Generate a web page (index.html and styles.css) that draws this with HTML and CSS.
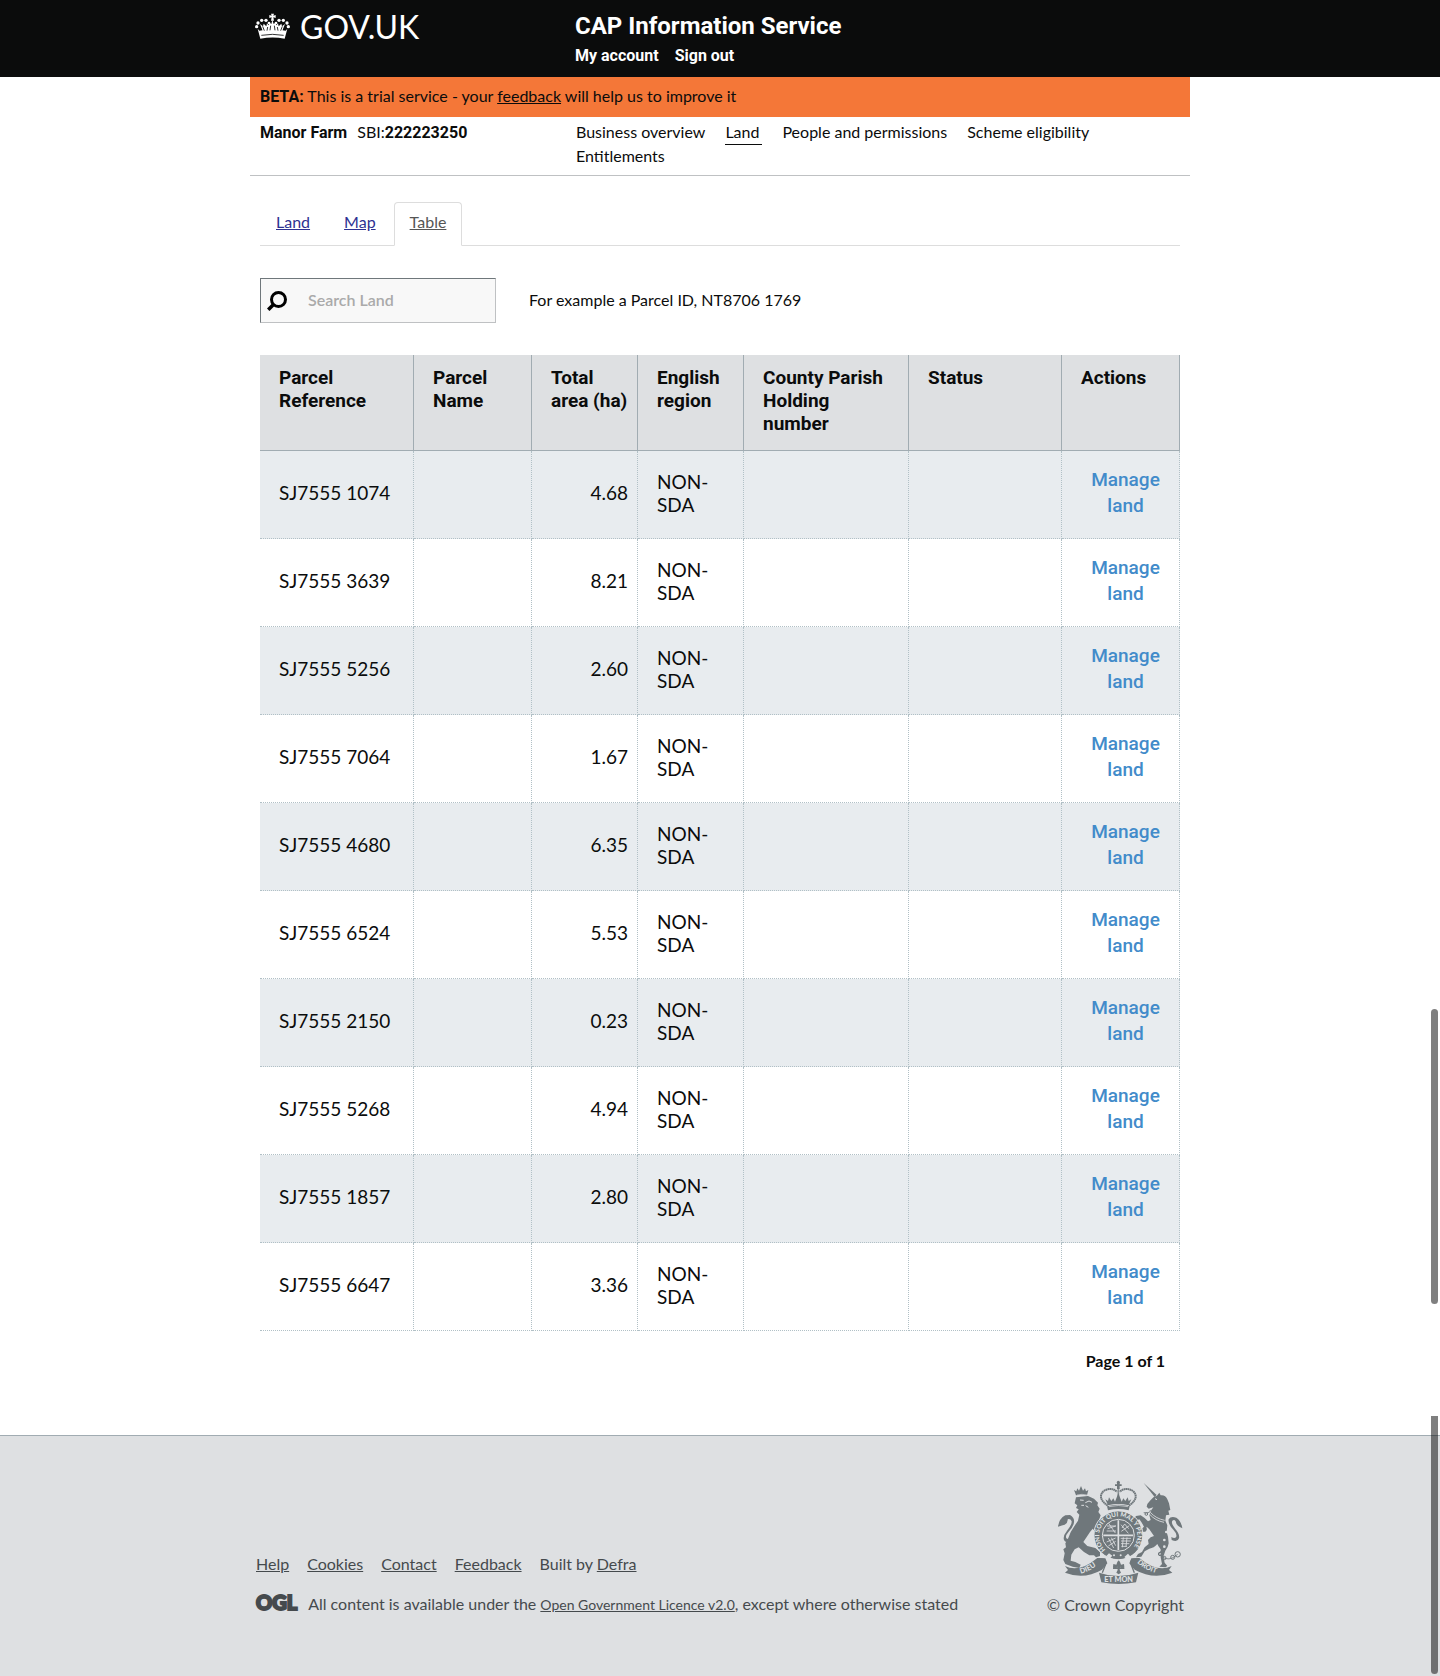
FILE: index.html
```html
<!DOCTYPE html>
<html lang="en">
<head>
<meta charset="utf-8">
<title>Land - CAP Information Service</title>
<link rel="stylesheet" href="styles.css">
</head>
<body>
<header class="site-header">
  <div class="wrap site-header-inner">
    <a class="logo" href="#">
      <svg class="crown" viewBox="45 39 108 78" aria-hidden="true">
        <g fill="#fff">
          <path d="M93 41h9l-2 6 7-2v9l-7-2 2 10h-9l2-10-7 2v-9l7 2z"/>
          <path d="M97 60l4 12 5-4 3 8 5-6 2 9 8-8 2 8 9-7-6 15-2 6-7-1-3 6-9-1-4-7h-13l-4 7-9 1-3-6-7 1-2-6-6-15 9 7 2-8 8 8 2-9 5 6 3-8 5 4z"/>
          <path d="M53 86l5 6q39-9 79 0l5-6-8 30q-36-7-73 0z"/>
          <circle cx="50" cy="80" r="5"/><circle cx="54" cy="69" r="5"/><circle cx="65" cy="61" r="5"/><circle cx="78" cy="61" r="5"/><circle cx="87" cy="69" r="4"/>
          <circle cx="145" cy="80" r="5"/><circle cx="141" cy="69" r="5"/><circle cx="130" cy="61" r="5"/><circle cx="117" cy="61" r="5"/><circle cx="108" cy="69" r="4"/>
        </g>
        <g fill="none" stroke="#0b0c0c" stroke-width="2.5">
          <path d="M64 106q33-6 67 0M68 79l5 13M127 79l-5 13M83 81l-2 11M112 81l2 11M92 77l-2 14M103 77l2 14"/>
        </g>
      </svg>
      <span>GOV.UK</span>
    </a>
    <div>
      <h1 class="service-name">CAP Information Service</h1>
      <nav class="account-links" aria-label="Account">
        <a href="#">My account</a>
        <a href="#">Sign out</a>
      </nav>
    </div>
  </div>
</header>

<div class="wrap">
  <p class="beta"><strong>BETA:</strong> This is a trial service - your <a href="#">feedback</a> will help us to improve it</p>
  <div class="business">
    <p class="business-name"><strong>Manor Farm</strong><span>SBI:<strong>222223250</strong></span></p>
    <nav class="business-nav" aria-label="Business">
      <a href="#">Business overview</a>
      <a class="current" href="#">Land</a>
      <a href="#">People and permissions</a>
      <a href="#">Scheme eligibility</a>
      <a href="#">Entitlements</a>
    </nav>
  </div>
</div>

<main class="wrap main">
  <nav class="tabs" aria-label="Land views">
    <a href="#">Land</a>
    <a href="#">Map</a>
    <a class="active" href="#">Table</a>
  </nav>
  <form class="search">
    <div class="search-box">
      <input id="search" type="text" placeholder="Search Land">
      <svg class="search-icon" viewBox="0 0 20 20" aria-hidden="true">
        <circle cx="11.500" cy="8.500" r="7" fill="none" stroke="#000" stroke-width="3"/>
        <path d="M6.500 13.500L1.200 18.800" stroke="#000" stroke-width="3.500"/>
      </svg>
    </div>
    <label for="search">For example a Parcel ID, NT8706 1769</label>
  </form>
  <table class="parcels">
    <colgroup>
      <col class="c-ref"><col class="c-name"><col class="c-area"><col class="c-area"><col class="c-cph"><col class="c-status"><col class="c-name">
    </colgroup>
    <thead>
      <tr><th>Parcel Reference</th><th>Parcel Name</th><th>Total area (ha)</th><th>English region</th><th>County Parish Holding number</th><th>Status</th><th>Actions</th></tr>
    </thead>
    <tbody>
      <tr><td>SJ7555 1074</td><td></td><td class="num">4.68</td><td>NON-SDA</td><td></td><td></td><td class="act"><a href="#">Manage land</a></td></tr>
      <tr><td>SJ7555 3639</td><td></td><td class="num">8.21</td><td>NON-SDA</td><td></td><td></td><td class="act"><a href="#">Manage land</a></td></tr>
      <tr><td>SJ7555 5256</td><td></td><td class="num">2.60</td><td>NON-SDA</td><td></td><td></td><td class="act"><a href="#">Manage land</a></td></tr>
      <tr><td>SJ7555 7064</td><td></td><td class="num">1.67</td><td>NON-SDA</td><td></td><td></td><td class="act"><a href="#">Manage land</a></td></tr>
      <tr><td>SJ7555 4680</td><td></td><td class="num">6.35</td><td>NON-SDA</td><td></td><td></td><td class="act"><a href="#">Manage land</a></td></tr>
      <tr><td>SJ7555 6524</td><td></td><td class="num">5.53</td><td>NON-SDA</td><td></td><td></td><td class="act"><a href="#">Manage land</a></td></tr>
      <tr><td>SJ7555 2150</td><td></td><td class="num">0.23</td><td>NON-SDA</td><td></td><td></td><td class="act"><a href="#">Manage land</a></td></tr>
      <tr><td>SJ7555 5268</td><td></td><td class="num">4.94</td><td>NON-SDA</td><td></td><td></td><td class="act"><a href="#">Manage land</a></td></tr>
      <tr><td>SJ7555 1857</td><td></td><td class="num">2.80</td><td>NON-SDA</td><td></td><td></td><td class="act"><a href="#">Manage land</a></td></tr>
      <tr><td>SJ7555 6647</td><td></td><td class="num">3.36</td><td>NON-SDA</td><td></td><td></td><td class="act"><a href="#">Manage land</a></td></tr>
    </tbody>
  </table>
  <p class="paging">Page 1 of 1</p>
</main>

<footer class="site-footer">
  <div class="wrap site-footer-inner">
    <div>
      <nav class="footer-links" aria-label="Support">
        <a href="#">Help</a>
        <a href="#">Cookies</a>
        <a href="#">Contact</a>
        <a href="#">Feedback</a>
        <span>Built by <a href="#">Defra</a></span>
      </nav>
      <p class="licence"><span class="ogl">OGL</span><span>All content is available under the <a href="#">Open Government Licence v2.0</a>, except where otherwise stated</span></p>
    </div>
    <div class="copyright">
      <svg class="arms" viewBox="85 60 381 312" aria-hidden="true">
        <g fill="#6f777b">
          <!-- crest crown -->
          <circle cx="269" cy="67" r="4.500"/><path d="M259 73h20v5h-20zM265 67h8v20h-8z"/>
          <path d="M235 139q34-9 68 0l-3 12q-31-8-62 0z"/>
          <path d="M238 136l-8-18 8 5 3-11 7 11 6-8 5 10 7-18 3-8 3 8 7 18 5-10 6 8 7-11 3 11 8-5-8 18q-31-8-62 0z"/>
          <!-- lion -->
          <path d="M142 106l-6-16 7 4 3-9 5 7 6-14 6 14 6-7 3 9 7-4-4 16q-16-4-33 0z"/>
          <path d="M142 112L178 108 196 116 208 128 206 136 213 146 209 156 216 166 212 178 217 186 212 194Q222 200 220 212L226 226 218 240 208 236 206 222 192 206 184 216 172 234 164 246 176 258 200 264 214 276 214 288 202 292 196 286 182 286 166 276 150 262 138 268 128 284 126 302 140 306 156 314 152 324 132 320 110 312 104 300 108 280 104 268 112 262 110 250 118 236Q124 216 136 200L148 182 152 164 144 156 150 148 142 144 146 136 138 130z"/>
          <path d="M88 200q3-24 22-34l14-1q14 8 12 22-1 12-16 28-11 12-7 20 4 4 14 0l-1 8q-16 7-20-3-4-12 9-28 15-18 14-28-4-9-12-6 1 10-9 16-7 2-20 6z"/>
          <!-- unicorn -->
          <path d="M345 69l39 36-6 6z"/>
          <path d="M384 108L392 98 396 106Q410 104 416 118L421 130 425 150 419 152 422 164 412 166 410 182 416 196 414 216Q420 232 420 250 418 264 410 272L404 290 408 308 416 318 410 322 392 320 400 312 396 292 396 268Q388 258 386 252 376 264 362 266L348 274 338 290 322 292 328 282 340 276 348 262 360 252 358 240 366 232 376 228 362 208 354 200 352 214 342 216 340 206 346 200 338 186 332 178 322 182 316 176 322 168 336 166 348 174 358 184 366 180 362 166 368 150 374 142 360 146 354 140 356 132 366 120 376 110z"/>
          <path d="M461 205q-3-22-18-32-17-6-23 5-3 14 14 31 13 14 8 23-5 4-14-1l1 9q18 8 22-5 3-12-11-28-14-18-9-25 6-5 10 2 1 9 8 14 6 4 12 7z"/>
          <!-- supporters' ribbon -->
          <path d="M109 318q42 22 97-24l24 1 6 15-16 19q-54 31-111 9l9-8zM429 318q-42 22-97-24l-24 1-6 15 16 19q56 31 113 9l-10-8z"/>
          <path d="M211 338q58 20 118 0l-7 29q-52 10-104 0z"/>
          <!-- shield with garter -->
          <circle cx="269" cy="226" r="72"/>
          <path d="M253 322h34v5h-34zM266 306l4-6 4 6 3 8 9-2 1 9-7 3-6-4-1 10 4 8-7 5-7-5 4-8-1-10-6 4-7-3 1-9 9 2z"/>
        </g>
        <g fill="none" stroke="#6f777b">
          <path d="M237 137q-33-24-12-44 22-13 40 2M301 137q33-24 12-44-22-13-40 2" stroke-width="6" stroke-dasharray="5 1"/>
          <path d="M269 85v43" stroke-width="5" stroke-dasharray="4 2"/>
          <path d="M345 158q22 2 20-8M410 219q6 25-4 42t-16 18q18 26 43 14l14-10" stroke-width="2.500"/>
          <g stroke-width="3"><circle cx="394" cy="282" r="5"/><circle cx="407" cy="294" r="5"/><circle cx="432" cy="292" r="6"/><circle cx="447" cy="283" r="8"/><circle cx="353" cy="162" r="4"/><circle cx="348" cy="208" r="5"/></g>
          <path d="M207 297q29-4 23 18l-9 23M331 297q-29-4-23 18l9 23" stroke-width="4"/>
        </g>
        <g fill="none" stroke="#dee0e2">
          <path d="M145 105q15-4 30 0M241 140q28-7 57 0" stroke-width="2"/>
          <circle cx="269" cy="226" r="48" stroke-width="3"/>
          <circle cx="269" cy="226" r="74" stroke-width="3"/>
          <path d="M269 181v90M224 226h90" stroke-width="5"/>
          <path d="M235 198h27M237 206l24-8M234 213h28M240 190l20 29M277 194l22 26M278 214l24-17M280 204l8-12 12 14M276 235h31M277 243h29M277 251h25M278 259h17M284 232l-3 30M295 232l-3 28M239 234l16 30M248 233l13 24M234 246l27-12M239 258l22-14" stroke-width="2.500"/>
          <path d="M365 157q17 19 43 24M363 163q17 19 43 24" stroke-width="2.500"/>
          <path d="M154 120l11 1M170 128l11-5 9 4M171 137l8 5M158 136h8M379 116l6 3" stroke-width="3"/>
        </g>
        <g fill="#dee0e2">
          <path d="M233 288l8-8 10 7-8 9zM287 291l11-10 8 9-11 8z"/>
          <circle cx="256" cy="286" r="3"/><circle cx="276" cy="286" r="3"/>
          <circle cx="413" cy="216" r="4"/><circle cx="407" cy="240" r="4"/><circle cx="407" cy="260" r="4"/>
        </g>
        <path id="garter" fill="none" d="M231 269A57 57 0 1 1 309 267"/>
        <path id="ribbon-l" fill="none" d="M156 341Q186 333 212 310"/>
        <path id="ribbon-r" fill="none" d="M325 308Q352 333 390 341"/>
        <g class="motto">
          <text font-size="19"><textPath href="#garter">HONI SOIT QUI MAL Y PENSE</textPath></text>
          <text font-size="22"><textPath href="#ribbon-l">DIEU</textPath></text>
          <text font-size="21"><textPath href="#ribbon-r">DROIT</textPath></text>
          <text font-size="22" x="270" y="365" text-anchor="middle">ET MON</text>
        </g>
      </svg>
      <a href="#">© Crown Copyright</a>
    </div>
  </div>
</footer>
<div class="scroll-thumb scroll-thumb-upper"></div>
<div class="scroll-thumb scroll-thumb-lower"></div>
</body>
</html>
```
FILE: styles.css
```css
* { box-sizing: border-box; }
body {
  position: relative;
  margin: 0;
  background: #fff;
  color: #0b0c0c;
  font: 16px/24px Lato, "Liberation Sans", sans-serif;
}
p, h1 { margin: 0; }
a { color: inherit; }
strong, .service-name, .account-links, .parcels th, .parcels .act { font-family: Roboto, "Liberation Sans", sans-serif; }
strong { line-height: 20px; }
.wrap { max-width: 940px; margin: 0 auto; }

.site-header { background: #0b0c0c; color: #fff; }
.site-header-inner {
  display: grid;
  grid-template-columns: 320px 1fr;
  padding: 11px 5px 9px;
}
.site-header a { text-decoration: none; }
.logo { display: flex; align-items: flex-start; gap: 9px; font: 32px/32px Lato, sans-serif; }
.crown { width: 36px; height: 26px; margin-top: 2px; }
.service-name { font-size: 24px; line-height: 30px; font-weight: 700; }
.account-links { display: flex; gap: 16px; padding-top: 3px; font-weight: 700; }

.beta { padding: 7px 10px 9px; background: #f47738; }
.business {
  display: grid;
  grid-template-columns: 316px 1fr;
  padding: 3px 10px 7px;
  border-bottom: 1px solid #bfc1c3;
}
.business-name { display: flex; align-items: baseline; gap: 10px; }
.business-nav { display: flex; flex-wrap: wrap; column-gap: 20px; padding-right: 60px; }
.business-nav a { height: 24px; text-decoration: none; }
.business-nav .current { height: 25px; margin-bottom: -1px; padding-right: 3px; border-bottom: 1px solid #0b0c0c; }

.main { padding: 26px 10px 61px; }
.tabs { display: flex; gap: 2px; border-bottom: 1px solid #dddddd; color: #2e3191; }
.tabs a { padding: 7px 15px 11px; margin-bottom: -1px; border: 1px solid transparent; border-radius: 4px 4px 0 0; }
.tabs .active { color: #555555; border-color: #dddddd; border-bottom-color: #fff; background: #fff; }

.search { display: flex; align-items: center; gap: 33px; margin: 32px 0; }
.search label { padding-bottom: 2px; }
.search-box { position: relative; width: 236px; }
.search input {
  display: block;
  width: 100%;
  height: 45px;
  padding: 0 10px 2px 47px;
  border: 1px solid #bfc1c3;
  border-top-color: #6f777b;
  border-left-color: #6f777b;
  border-radius: 0;
  background: #f8f8f8;
  font: inherit;
  font-weight: 600;
}
.search input::placeholder { color: #aaaaaa; }
.search-icon { position: absolute; left: 7px; top: 13px; width: 20px; height: 20px; }

.parcels { width: 100%; table-layout: fixed; border-collapse: separate; border-spacing: 0; font-size: 19px; line-height: 23px; }
.c-ref { width: 154px; }
.c-name { width: 118px; }
.c-area { width: 106px; }
.c-cph { width: 165px; }
.c-status { width: 153px; }
.parcels th {
  padding: 11px 9px 15px 19px;
  background: #dee0e2;
  border-right: 1px solid #a1acb2;
  border-bottom: 1px solid #a1acb2;
  text-align: left;
  vertical-align: top;
  font-weight: 700;
}
.parcels td {
  height: 88px;
  padding: 0 9px 4px 19px;
  border-right: 1px dotted #b1c0c6;
  border-bottom: 1px dotted #b1c0c6;
}
.parcels tbody tr:nth-child(odd) { background: #e8ecef; }
.parcels .num { text-align: right; }
.parcels .act { text-align: center; line-height: 26px; font-weight: 500; }
.act a { color: #428bca; text-decoration: none; }
.paging { padding: 18px 15px 1px; text-align: right; font-weight: 700; }

.site-footer { padding: 44px 0 59px; background: #dee0e2; border-top: 1px solid #a1acb2; color: #454a4d; }
.site-footer-inner { display: flex; justify-content: space-between; align-items: flex-end; padding: 0 6px; }
.footer-links { display: flex; gap: 18px; }
.licence { display: flex; gap: 11px; align-items: flex-start; padding-top: 16px; }
.licence a { font-size: 14px; }
.ogl { font: 900 20px/20px Lato, sans-serif; -webkit-text-stroke: 2px #454a4d; }
.copyright { display: flex; flex-direction: column; align-items: flex-end; gap: 9px; }
.copyright a { text-decoration: none; }
.arms { width: 127px; height: 104px; }
.motto { fill: #dee0e2; font-family: Lato, sans-serif; font-weight: 900; }

/* overlay scroll indicators */
.scroll-thumb { position: absolute; right: 2px; width: 7px; background: rgba(0, 0, 0, 0.5); }
.scroll-thumb-upper { top: 1009px; height: 295px; border-radius: 4px; }
.scroll-thumb-lower { top: 1416px; bottom: 2px; border-radius: 0 0 4px 4px; }
```
